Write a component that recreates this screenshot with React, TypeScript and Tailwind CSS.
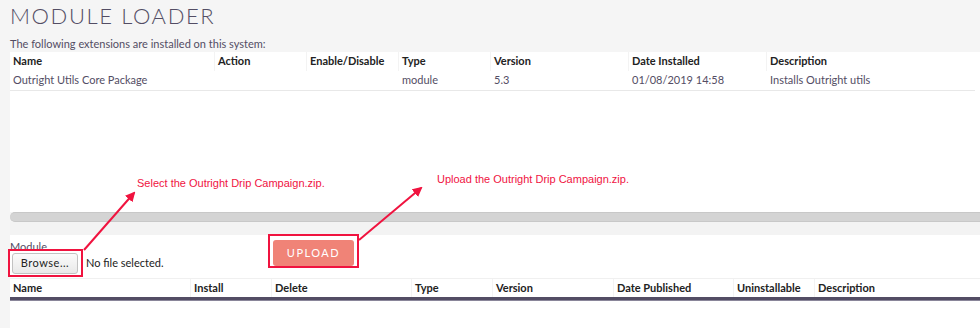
export default function App() {
    const installed = ["Name", "Action", "Enable/Disable", "Type", "Version", "Date Installed", "Description"];
    const widths = ["w-[205px]", "w-[92px]", "w-[92px]", "w-[92px]", "w-[138px]", "w-[138px]", "flex-1"];
    const row = ["Outright Utils Core Package", "", "", "module", "5.3", "01/08/2019 14:58", "Installs Outright utils"];
    const available = ["Name", "Install", "Delete", "Type", "Version", "Date Published", "Uninstallable", "Description"];
    const widths2 = ["w-[181px]", "w-[81px]", "w-[140px]", "w-[81px]", "w-[121px]", "w-[120px]", "w-[81px]", "flex-1"];

    return (
        <div className="relative w-[980px] h-[328px] overflow-hidden bg-[#f5f5f5] text-[#534d64] font-['Lato',sans-serif]">
            <h1 className="pl-[10px] pt-[2px] h-[36px] text-[22px] leading-[28px] font-light tracking-[1.6px] text-[#534d64]">
                MODULE LOADER
            </h1>
            <p className="pl-[10px] text-[11px] leading-[16px] h-[16px]">The following extensions are installed on this system:</p>

            <div className="ml-[10px] h-[160px] bg-white flex flex-col">
                <div className="flex h-[19px] items-center text-[11px] font-bold text-[#222] mr-[7px]">
                    {installed.map((h, i) => (
                        <div key={h} className={`${widths[i]} pl-[3px] h-full flex items-center border-r border-[#f3f3f3] last:border-r-0`}>{h}</div>
                    ))}
                </div>
                <div className="flex h-[20px] items-center text-[11px] border-b border-[#e8e8e8] mr-[5px] bg-white">
                    {row.map((c, i) => (
                        <div key={i} className={`${widths[i]} pl-[3px]`}>{c}</div>
                    ))}
                </div>
            </div>

            <div className="ml-[10px] h-[10px] rounded-l-full bg-[#d4d4d4] border-y border-[#c8c8c8]" />
            <div className="ml-[10px] h-[13px] bg-[#f3f3f3]" />

            <div className="ml-[10px] h-[93px] bg-white">
                <div className="flex">
                    <div className="w-[260px] pt-[6px]">
                        <div className="text-[11px] leading-[12px]">Module</div>
                        <div className="flex items-center ml-[2px]">
                            <button className="w-[66px] h-[21px] rounded-[3px] border border-[#c2c2c2] bg-gradient-to-b from-[#fbfbfb] to-[#e9e9e9] text-[11px] text-[#222] tracking-[0.5px]">
                                Browse...
                            </button>
                            <span className="ml-[8px] text-[11px] text-[#222]">No file selected.</span>
                        </div>
                    </div>
                    <div className="pt-[4px] pl-[3px]">
                        <button className="w-[81px] h-[26px] rounded-[3px] bg-[#f08377] text-white text-[11px] tracking-[1.5px]">
                            UPLOAD
                        </button>
                    </div>
                </div>

                <div className="mt-[4px] flex h-[19px] items-center text-[11px] font-bold text-[#222] border-t border-[#f0f0f0]">
                    {available.map((h, i) => (
                        <div key={h} className={`${widths2[i]} pl-[3px] h-full flex items-center border-r border-[#f3f3f3] last:border-r-0`}>{h}</div>
                    ))}
                </div>
                <div className="h-[4px] bg-[#534d64] border-b border-[#8a869a]" />
            </div>

            <svg className="absolute inset-0 pointer-events-none" width="980" height="328">
                <defs>
                    <marker id="arr" viewBox="0 0 10 10" refX="8" refY="5" markerWidth="5" markerHeight="5" orient="auto">
                        <path d="M0 0 L10 5 L0 10 z" fill="#f0133f" />
                    </marker>
                </defs>
                <rect x="9" y="250" width="73" height="26" fill="none" stroke="#f0133f" strokeWidth="2" />
                <rect x="269" y="235" width="89" height="32" fill="none" stroke="#f0133f" strokeWidth="2" />
                <line x1="84" y1="250" x2="134" y2="193" stroke="#f0133f" strokeWidth="2" markerEnd="url(#arr)" />
                <line x1="359" y1="240" x2="421" y2="188" stroke="#f0133f" strokeWidth="2" markerEnd="url(#arr)" />
            </svg>
            <div className="absolute left-[137px] top-[175px] text-[11px] text-[#f0133f] font-['Liberation_Sans',sans-serif]">
                Select the Outright Drip Campaign.zip.
            </div>
            <div className="absolute left-[437px] top-[171px] text-[11px] text-[#f0133f] font-['Liberation_Sans',sans-serif]">
                Upload the Outright Drip Campaign.zip.
            </div>
        </div>
    );
}
